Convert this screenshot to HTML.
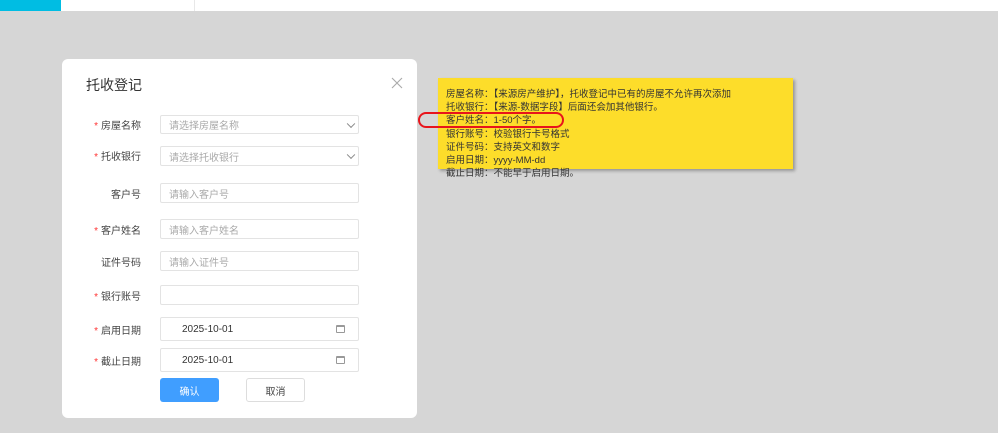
<!DOCTYPE html>
<html><head><meta charset="utf-8"><style>
*{margin:0;padding:0;box-sizing:border-box}
body{width:998px;height:433px;background:#d6d6d6;position:relative;overflow:hidden;font-family:"Liberation Sans","Noto Sans CJK SC",sans-serif;}
.top{position:absolute;left:0;top:0;width:998px;height:11px;background:#fff}
.cy{position:absolute;left:0;top:0;width:61px;height:11px;background:#00bde3}
.dv{position:absolute;left:194px;top:0;width:1px;height:11px;background:#e8e8e8}
.dlg{position:absolute;left:62px;top:59px;width:355px;height:359px;background:#fff;border-radius:6px}
.t{position:absolute;left:86px;top:75px;font-size:14px;color:#333}
.x{position:absolute;left:391px;top:77px;width:12px;height:12px}
.lb{position:absolute;right:857px;font-size:10px;color:#444;white-space:nowrap}
.lb i{color:#f33;font-style:normal;margin-right:3px}
.in{position:absolute;left:160px;width:199px;border:1px solid #e3e3e3;border-radius:2px;font-size:10px;color:#aaa;padding-left:8px;display:flex;align-items:center}
.in.d{color:#333;padding-left:21px}
.ar{position:absolute;right:4px;top:50%;width:6px;height:6px;border-right:1px solid #888;border-bottom:1px solid #888;transform:translateY(-70%) rotate(45deg)}
.cal{position:absolute;right:13px;top:50%;margin-top:-4px;width:9px;height:8px;border:1px solid #999;border-top-width:2px;border-radius:1px}
.btn{position:absolute;top:378px;height:24px;width:59px;border-radius:3px;font-size:10px;display:flex;align-items:center;justify-content:center}
.note{position:absolute;left:438px;top:78px;width:355px;height:91px;background:#fddd2a;box-shadow:2px 2px 3px rgba(0,0,0,.3)}
.nt{position:absolute;left:446px;top:88px;font-size:9.5px;line-height:13.2px;color:#333;white-space:nowrap}
.ov{position:absolute;left:418px;top:112px;width:146px;height:16px;border:2px solid #e8141b;border-radius:9px}
</style></head><body>
<div class="top"><div class="cy"></div><div class="dv"></div></div>
<div class="dlg"></div>
<div class="t">托收登记</div>
<svg class="x" viewBox="0 0 12 12"><path d="M1 1L11 11M11 1L1 11" stroke="#aaa" stroke-width="1.1"/></svg>

<div class="lb" style="top:117px"><i>*</i>房屋名称</div>
<div class="in" style="top:115px;height:19px">请选择房屋名称<span class="ar"></span></div>
<div class="lb" style="top:148px"><i>*</i>托收银行</div>
<div class="in" style="top:146px;height:20px">请选择托收银行<span class="ar"></span></div>
<div class="lb" style="top:186px">客户号</div>
<div class="in" style="top:183px;height:20px">请输入客户号</div>
<div class="lb" style="top:222px"><i>*</i>客户姓名</div>
<div class="in" style="top:219px;height:20px">请输入客户姓名</div>
<div class="lb" style="top:254px">证件号码</div>
<div class="in" style="top:251px;height:20px">请输入证件号</div>
<div class="lb" style="top:288px"><i>*</i>银行账号</div>
<div class="in" style="top:285px;height:20px"></div>
<div class="lb" style="top:322px"><i>*</i>启用日期</div>
<div class="in d" style="top:317px;height:24px">2025-10-01<span class="cal"></span></div>
<div class="lb" style="top:353px"><i>*</i>截止日期</div>
<div class="in d" style="top:348px;height:24px">2025-10-01<span class="cal"></span></div>
<div class="btn" style="left:160px;background:#409eff;color:#fff">确认</div>
<div class="btn" style="left:246px;border:1px solid #ddd;color:#444;background:#fff">取消</div>

<div class="note"></div>
<div class="nt">房屋名称：【来源房产维护】，托收登记中已有的房屋不允许再次添加<br>托收银行：【来源-数据字段】后面还会加其他银行。<br>客户姓名：1-50个字。<br>银行账号：校验银行卡号格式<br>证件号码：支持英文和数字<br>启用日期：yyyy-MM-dd<br>截止日期：不能早于启用日期。</div>
<div class="ov"></div>
</body></html>
